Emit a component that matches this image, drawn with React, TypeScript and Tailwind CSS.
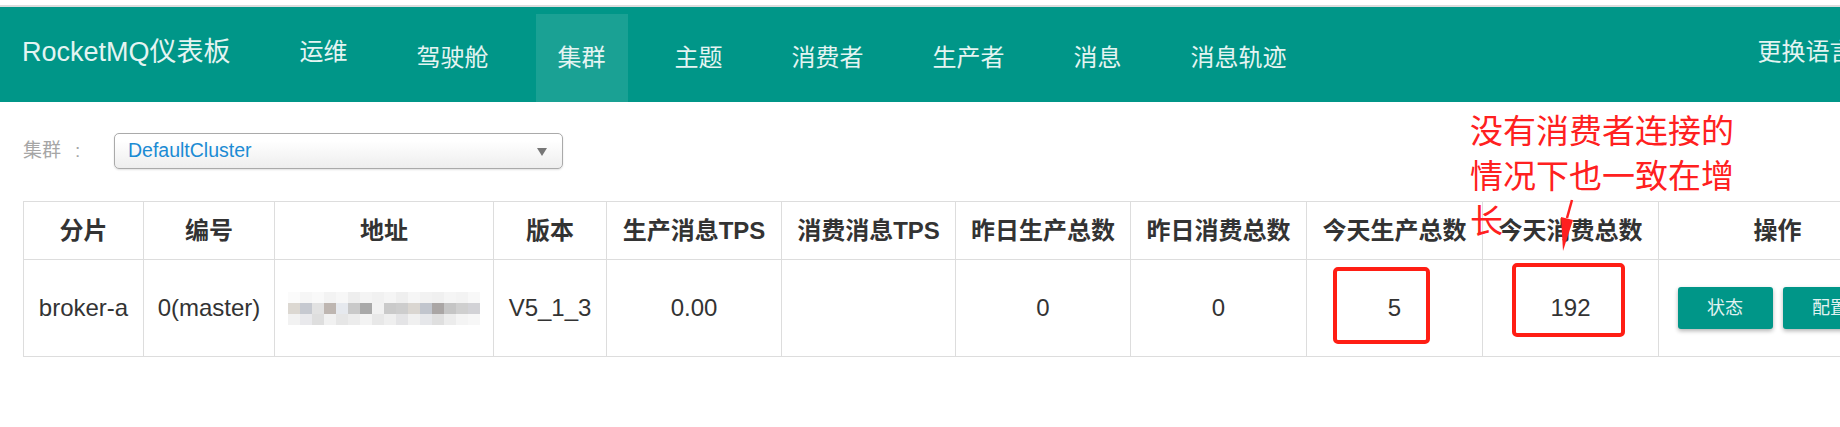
const FONT = 'font-["Liberation_Sans","Noto_Sans_CJK_SC",sans-serif]';

const navItems = ['驾驶舱', '集群', '主题', '消费者', '生产者', '消息', '消息轨迹'];

const columns = [
  { label: '分片', w: 'w-[120px]' },
  { label: '编号', w: 'w-[131px]' },
  { label: '地址', w: 'w-[219px]' },
  { label: '版本', w: 'w-[113px]' },
  { label: '生产消息TPS', w: 'w-[175px]' },
  { label: '消费消息TPS', w: 'w-[174px]' },
  { label: '昨日生产总数', w: 'w-[175px]' },
  { label: '昨日消费总数', w: 'w-[176px]' },
  { label: '今天生产总数', w: 'w-[176px]' },
  { label: '今天消费总数', w: 'w-[176px]' },
  { label: '操作', w: 'w-[238px]' },
];

// pixelated (blurred) broker address
const mosaicRows = [
  ['#fbfbfb', '#f6f6f6', '#f9f9f9', '#f3f3f3', '#f7f7f7', '#eeeeee', '#f4f4f4', '#f1f1f1', '#f5f5f5', '#efefef', '#f6f6f6', '#f2f2f2', '#f0f0f0', '#f5f5f5', '#f3f3f3', '#f8f8f8'],
  ['#dcd8d2', '#c6c9d0', '#e2e2e2', '#beb6b1', '#e6e9ee', '#c9c9c9', '#a9a9a9', '#f2f2f2', '#cacaca', '#cdcdcd', '#dad6d1', '#c1c5cd', '#aaa6a5', '#c5c5c5', '#cfcfcf', '#d2d2d6'],
  ['#f2f2f2', '#e9e9ec', '#dedede', '#f1f1f1', '#e6e6e6', '#ececec', '#f3f3f3', '#e8e8e8', '#efefef', '#e4e4e6', '#f0f0f0', '#e6e7ea', '#dfdfdf', '#ececec', '#f4f4f4', '#f7f7f7'],
];

function Mosaic() {
  return (
    <svg width="192" height="34" viewBox="0 0 192 34" className="mx-auto block">
      {mosaicRows.map((row, r) =>
        row.map((c, i) => <rect key={`${r}-${i}`} x={i * 12} y={r * 11 + 1} width="12" height="11" fill={c} />),
      )}
    </svg>
  );
}

export default function App() {
  return (
    <div className={`relative w-full overflow-hidden bg-white ${FONT}`}>
      <div className="mt-[5px] h-[2px] bg-[#dddddd]" />

      {/* navbar */}
      <div className="flex h-[95px] whitespace-nowrap bg-[#009688] text-[#e4f4f2]">
        <div className="flex shrink-0 items-center pb-[4px] pl-[22px] text-[27px]">RocketMQ仪表板</div>
        <div className="ml-[47px] flex shrink-0 items-center px-[22px] pb-[5px] text-[24px]">运维</div>
        <div className="ml-[25px] flex shrink-0 gap-[25px] pt-[7px]">
          {navItems.map((item) => (
            <div
              key={item}
              className={
                item === '集群'
                  ? 'flex items-center bg-[#1aa194] px-[22px] text-[24px]'
                  : 'flex items-center px-[22px] text-[24px]'
              }
            >
              {item}
            </div>
          ))}
        </div>
        <div className="ml-[427px] flex shrink-0 items-center px-[22px] pb-[5px] text-[24px]">更换语言</div>
      </div>

      {/* cluster select */}
      <div className="mt-[31px] flex h-[36px] items-center pl-[23px]">
        <div className="flex w-[91px] text-[19px] text-[#a6a6a6]">
          集群<span className="ml-[14px]">:</span>
        </div>
        <div className="relative flex h-[36px] w-[449px] items-center rounded-[5px] border border-[#aaaaaa] bg-gradient-to-b from-white from-20% to-[#eeeeee] pl-[13px] text-[19.5px] text-[#1b8bd4] shadow-[0_1px_2px_rgba(0,0,0,0.12)]">
          DefaultCluster
          <span className="absolute right-[15px] top-[14px] h-0 w-0 border-x-[5px] border-t-[8px] border-x-transparent border-t-[#777777]" />
        </div>
      </div>

      {/* broker table */}
      <table className="ml-[23px] mt-[32px] w-[1873px] table-fixed border-collapse text-[24px] text-[#333333]">
        <thead>
          <tr>
            {columns.map((col) => (
              <th key={col.label} className={`${col.w} h-[58px] border border-[#dddddd] p-0 text-center align-middle font-bold`}>
                {col.label}
              </th>
            ))}
          </tr>
        </thead>
        <tbody>
          <tr className="h-[97px] text-center">
            <td className="border border-[#dddddd]">broker-a</td>
            <td className="border border-[#dddddd]">0(master)</td>
            <td className="border border-[#dddddd]">
              <Mosaic />
            </td>
            <td className="border border-[#dddddd]">V5_1_3</td>
            <td className="border border-[#dddddd]">0.00</td>
            <td className="border border-[#dddddd]"></td>
            <td className="border border-[#dddddd]">0</td>
            <td className="border border-[#dddddd]">0</td>
            <td className="border border-[#dddddd]">5</td>
            <td className="border border-[#dddddd]">192</td>
            <td className="border border-[#dddddd]">
              <div className="flex justify-center gap-[10px]">
                <button className="h-[42px] w-[95px] rounded-[3px] bg-[#009688] text-[18px] text-[#e0f2f1] shadow-[0_2px_4px_rgba(0,0,0,0.3)]">
                  状态
                </button>
                <button className="h-[42px] w-[95px] rounded-[3px] bg-[#009688] text-[18px] text-[#e0f2f1] shadow-[0_2px_4px_rgba(0,0,0,0.3)]">
                  配置
                </button>
              </div>
            </td>
          </tr>
        </tbody>
      </table>
      <div className="h-[70px]" />

      {/* red annotations drawn on the screenshot */}
      <div className="absolute left-[1333px] top-[267px] h-[77px] w-[97px] rounded-[5px] border-[4px] border-[#ff1e14]" />
      <div className="absolute left-[1512px] top-[263px] h-[74px] w-[113px] rounded-[5px] border-[4px] border-[#ff1e14]" />
      <div className="absolute left-[1470px] top-[109px] w-[280px] text-[33px] leading-[45px] text-[#ff2020]">
        没有消费者连接的
        <br />
        情况下也一致在增
        <br />
        长
      </div>
      <svg className="absolute left-[1555px] top-[196px]" width="24" height="60" viewBox="0 0 24 60">
        <line x1="17" y1="4" x2="12" y2="22" stroke="#ff2020" strokeWidth="2.5" />
        <polygon points="6,21 18,24 8,55" fill="#ff2020" />
      </svg>
    </div>
  );
}
